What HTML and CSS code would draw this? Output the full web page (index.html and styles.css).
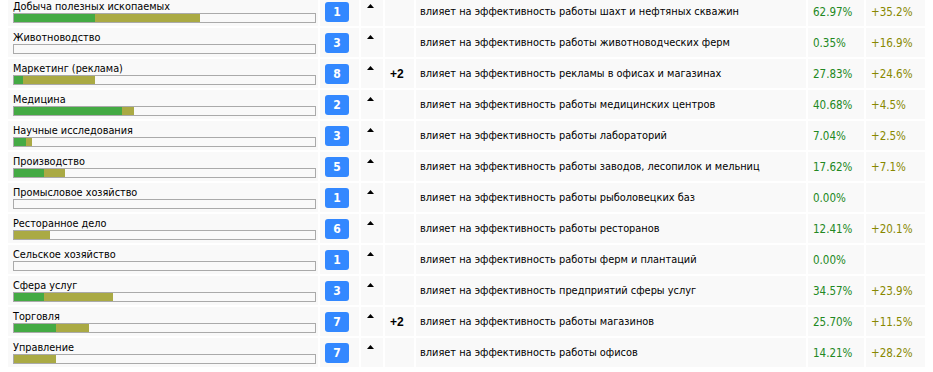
FILE: index.html
```html
<!DOCTYPE html>
<html lang="ru">
<head>
<meta charset="utf-8">
<title>Отрасли</title>
<link rel="stylesheet" href="styles.css">
</head>
<body>
<table class="sectors">
  <colgroup>
    <col class="c-name"><col class="c-lvl"><col class="c-up"><col class="c-bonus"><col class="c-desc"><col class="c-pct"><col class="c-plus">
  </colgroup>
  <tbody>
    <tr>
      <td class="name"><div class="title">Добыча полезных ископаемых</div><div class="bar"><div class="total" style="width:186px"><div class="green" style="width:81px"></div></div></div></td>
      <td class="lvl"><span class="badge">1</span></td>
      <td class="up"><svg class="tri" width="7" height="4" viewBox="0 0 7 4"><polygon points="3.5,0 7,4 0,4"/></svg></td>
      <td class="bonus"></td>
      <td class="desc">влияет на эффективность работы шахт и нефтяных скважин</td>
      <td class="pct">62.97%</td>
      <td class="plus">+35.2%</td>
    </tr>
    <tr>
      <td class="name"><div class="title">Животноводство</div><div class="bar"><div class="total" style="width:0px"><div class="green" style="width:0px"></div></div></div></td>
      <td class="lvl"><span class="badge">3</span></td>
      <td class="up"><svg class="tri" width="7" height="4" viewBox="0 0 7 4"><polygon points="3.5,0 7,4 0,4"/></svg></td>
      <td class="bonus"></td>
      <td class="desc">влияет на эффективность работы животноводческих ферм</td>
      <td class="pct">0.35%</td>
      <td class="plus">+16.9%</td>
    </tr>
    <tr>
      <td class="name"><div class="title">Маркетинг (реклама)</div><div class="bar"><div class="total" style="width:81px"><div class="green" style="width:9px"></div></div></div></td>
      <td class="lvl"><span class="badge">8</span></td>
      <td class="up"><svg class="tri" width="7" height="4" viewBox="0 0 7 4"><polygon points="3.5,0 7,4 0,4"/></svg></td>
      <td class="bonus">+2</td>
      <td class="desc">влияет на эффективность рекламы в офисах и магазинах</td>
      <td class="pct">27.83%</td>
      <td class="plus">+24.6%</td>
    </tr>
    <tr>
      <td class="name"><div class="title">Медицина</div><div class="bar"><div class="total" style="width:120px"><div class="green" style="width:108px"></div></div></div></td>
      <td class="lvl"><span class="badge">2</span></td>
      <td class="up"><svg class="tri" width="7" height="4" viewBox="0 0 7 4"><polygon points="3.5,0 7,4 0,4"/></svg></td>
      <td class="bonus"></td>
      <td class="desc">влияет на эффективность работы медицинских центров</td>
      <td class="pct">40.68%</td>
      <td class="plus">+4.5%</td>
    </tr>
    <tr>
      <td class="name"><div class="title">Научные исследования</div><div class="bar"><div class="total" style="width:18px"><div class="green" style="width:12px"></div></div></div></td>
      <td class="lvl"><span class="badge">3</span></td>
      <td class="up"><svg class="tri" width="7" height="4" viewBox="0 0 7 4"><polygon points="3.5,0 7,4 0,4"/></svg></td>
      <td class="bonus"></td>
      <td class="desc">влияет на эффективность работы лабораторий</td>
      <td class="pct">7.04%</td>
      <td class="plus">+2.5%</td>
    </tr>
    <tr>
      <td class="name"><div class="title">Производство</div><div class="bar"><div class="total" style="width:51px"><div class="green" style="width:30px"></div></div></div></td>
      <td class="lvl"><span class="badge">5</span></td>
      <td class="up"><svg class="tri" width="7" height="4" viewBox="0 0 7 4"><polygon points="3.5,0 7,4 0,4"/></svg></td>
      <td class="bonus"></td>
      <td class="desc">влияет на эффективность работы заводов, лесопилок и мельниц</td>
      <td class="pct">17.62%</td>
      <td class="plus">+7.1%</td>
    </tr>
    <tr>
      <td class="name"><div class="title">Промысловое хозяйство</div><div class="bar"><div class="total" style="width:0px"><div class="green" style="width:0px"></div></div></div></td>
      <td class="lvl"><span class="badge">1</span></td>
      <td class="up"><svg class="tri" width="7" height="4" viewBox="0 0 7 4"><polygon points="3.5,0 7,4 0,4"/></svg></td>
      <td class="bonus"></td>
      <td class="desc">влияет на эффективность работы рыболовецких баз</td>
      <td class="pct">0.00%</td>
      <td class="plus"></td>
    </tr>
    <tr>
      <td class="name"><div class="title">Ресторанное дело</div><div class="bar"><div class="total" style="width:36px"><div class="green" style="width:0px"></div></div></div></td>
      <td class="lvl"><span class="badge">6</span></td>
      <td class="up"><svg class="tri" width="7" height="4" viewBox="0 0 7 4"><polygon points="3.5,0 7,4 0,4"/></svg></td>
      <td class="bonus"></td>
      <td class="desc">влияет на эффективность работы ресторанов</td>
      <td class="pct">12.41%</td>
      <td class="plus">+20.1%</td>
    </tr>
    <tr>
      <td class="name"><div class="title">Сельское хозяйство</div><div class="bar"><div class="total" style="width:0px"><div class="green" style="width:0px"></div></div></div></td>
      <td class="lvl"><span class="badge">1</span></td>
      <td class="up"><svg class="tri" width="7" height="4" viewBox="0 0 7 4"><polygon points="3.5,0 7,4 0,4"/></svg></td>
      <td class="bonus"></td>
      <td class="desc">влияет на эффективность работы ферм и плантаций</td>
      <td class="pct">0.00%</td>
      <td class="plus"></td>
    </tr>
    <tr>
      <td class="name"><div class="title">Сфера услуг</div><div class="bar"><div class="total" style="width:99px"><div class="green" style="width:30px"></div></div></div></td>
      <td class="lvl"><span class="badge">3</span></td>
      <td class="up"><svg class="tri" width="7" height="4" viewBox="0 0 7 4"><polygon points="3.5,0 7,4 0,4"/></svg></td>
      <td class="bonus"></td>
      <td class="desc">влияет на эффективность предприятий сферы услуг</td>
      <td class="pct">34.57%</td>
      <td class="plus">+23.9%</td>
    </tr>
    <tr>
      <td class="name"><div class="title">Торговля</div><div class="bar"><div class="total" style="width:75px"><div class="green" style="width:42px"></div></div></div></td>
      <td class="lvl"><span class="badge">7</span></td>
      <td class="up"><svg class="tri" width="7" height="4" viewBox="0 0 7 4"><polygon points="3.5,0 7,4 0,4"/></svg></td>
      <td class="bonus">+2</td>
      <td class="desc">влияет на эффективность работы магазинов</td>
      <td class="pct">25.70%</td>
      <td class="plus">+11.5%</td>
    </tr>
    <tr>
      <td class="name"><div class="title">Управление</div><div class="bar"><div class="total" style="width:42px"><div class="green" style="width:0px"></div></div></div></td>
      <td class="lvl"><span class="badge">7</span></td>
      <td class="up"><svg class="tri" width="7" height="4" viewBox="0 0 7 4"><polygon points="3.5,0 7,4 0,4"/></svg></td>
      <td class="bonus"></td>
      <td class="desc">влияет на эффективность работы офисов</td>
      <td class="pct">14.21%</td>
      <td class="plus">+28.2%</td>
    </tr>
  </tbody>
</table>
</body>
</html>
```
FILE: styles.css
```css
html, body {
  margin: 0;
  padding: 0;
  background: #ffffff;
}

body {
  font-family: "DejaVu Sans Condensed", "DejaVu Sans", sans-serif;
  font-size: 10.8px;
  color: #000000;
  overflow: hidden;
}

.sectors {
  margin: -5px 0 0 6px;
  border-collapse: separate;
  border-spacing: 2px;
  table-layout: fixed;
  width: 921px;
}

.c-name { width: 310px; }
.c-lvl { width: 39px; }
.c-up { width: 22px; }
.c-bonus { width: 29px; }
.c-desc { width: 390px; }
.c-pct { width: 56px; }
.c-plus { width: 59px; }

.sectors td {
  box-sizing: border-box;
  height: 29px;
  background: #f9f9f9;
  padding: 0 0 0 5px;
  vertical-align: middle;
  white-space: nowrap;
  overflow: hidden;
}

.sectors td.name {
  padding: 3px 2px 3px 5px;
  vertical-align: top;
}

.title {
  line-height: 13px;
  height: 13px;
}

.bar {
  box-sizing: border-box;
  width: 303px;
  height: 10px;
  border: 1px solid #aaaaaa;
  background: #f9f9f9;
  display: flex;
}

.total {
  height: 8px;
  background: #aaaa44;
  display: flex;
}

.green {
  height: 8px;
  background: #44aa44;
}

.badge {
  display: inline-block;
  width: 24px;
  height: 20px;
  line-height: 20px;
  border-radius: 3px;
  background: #3388ff;
  color: #ffffff;
  font-weight: bold;
  font-size: 12px;
  text-align: center;
  vertical-align: middle;
}

.sectors td.up {
  vertical-align: top;
  padding: 7px 0 0 6px;
}

.tri {
  display: block;
  fill: #000000;
}

.sectors td.bonus {
  font-weight: bold;
  font-family: "Liberation Sans", sans-serif;
  font-size: 12px;
}

.sectors td.desc {
  padding-left: 4px;
  font-size: 10.9px;
}

.sectors td.pct {
  color: #228822;
  font-size: 11.5px;
}

.sectors td.plus {
  color: #888800;
  font-size: 11.5px;
}
```
